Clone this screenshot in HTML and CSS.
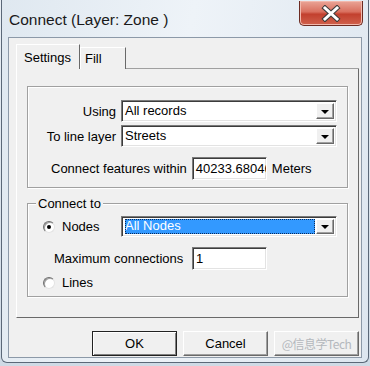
FILE: index.html
```html
<!DOCTYPE html>
<html lang="en">

<head>
    <meta charset="UTF-8">
    <title>Connect (Layer: Zone )</title>
    <link rel="stylesheet" href="styles.css">
</head>

<body>
    <div class="window">
        <div class="titlebar">
            <span class="title">Connect (Layer: Zone )</span>
            <div class="close-btn">
                <svg width="20" height="17" viewBox="0 0 20 17">
                    <path d="M4 3 L16 14 M16 3 L4 14" stroke="#3b3b3b" stroke-width="5" stroke-linecap="square" fill="none" />
                    <path d="M4 3 L16 14 M16 3 L4 14" stroke="#ffffff" stroke-width="3" stroke-linecap="square" fill="none" />
                </svg>
            </div>
        </div>

        <div class="client">
            <div class="tab-strip">
                <div class="tab tab-active">Settings</div>
                <div class="tab">Fill</div>
                <div class="tab-rest"></div>
            </div>

            <div class="tab-panel">
                <!-- options group, no caption -->
                <div class="group group-options">
                    <div class="field-row">
                        <span class="field-label">Using</span>
                        <div class="combo">
                            <span class="combo-text">All records</span>
                            <span class="combo-btn"><span class="arrow"></span></span>
                        </div>
                    </div>
                    <div class="field-row row-gap-small">
                        <span class="field-label">To line layer</span>
                        <div class="combo">
                            <span class="combo-text">Streets</span>
                            <span class="combo-btn"><span class="arrow"></span></span>
                        </div>
                    </div>
                    <div class="field-row row-within">
                        <span class="within-label">Connect features within</span>
                        <div class="textbox">40233.68046</div>
                        <span class="unit">Meters</span>
                    </div>
                </div>

                <fieldset class="group group-connect">
                    <legend>Connect to</legend>
                    <div class="field-row row-nodes">
                        <div class="radio-label"><span class="radio radio-on"></span>Nodes</div>
                        <div class="combo combo-focus">
                            <span class="combo-text"><span class="selection">All Nodes</span></span>
                            <span class="combo-btn"><span class="arrow"></span></span>
                        </div>
                    </div>
                    <div class="field-row row-max">
                        <span class="max-label">Maximum connections</span>
                        <div class="textbox">1</div>
                    </div>
                    <div class="field-row row-lines">
                        <div class="radio-label"><span class="radio"></span>Lines</div>
                    </div>
                </fieldset>
            </div>

            <div class="button-row">
                <button class="btn btn-default">OK</button>
                <button class="btn">Cancel</button>
                <button class="btn btn-help"><span class="watermark">@信息学Tech</span></button>
            </div>
        </div>
    </div>
</body>

</html>
```

FILE: styles.css
```css
*,
*::before,
*::after {
    box-sizing: border-box;
    margin: 0;
    padding: 0;
}

body {
    width: 370px;
    height: 366px;
    overflow: hidden;
    background: linear-gradient(#e9eff5, #cfdae5);
    font-family: "Liberation Sans", Arial, sans-serif;
    font-size: 13px;
    color: #000;
    white-space: nowrap;
}

.window {
    width: 368px;
    height: 363px;
    margin-left: 1px;
    border: 1px solid #5b6878;
    border-top: none;
    border-radius: 0 0 6px 6px;
    background: linear-gradient(100deg, #dfe8f0 0%, #eef3f8 45%, #dde6ef 100%);
}

/* title bar */
.titlebar {
    height: 37px;
    display: flex;
    justify-content: space-between;
    align-items: flex-start;
    padding-left: 7px;
    padding-right: 5px;
}

.title {
    margin-top: 11px;
    font-size: 15.5px;
    line-height: 18px;
    color: #1a1a1a;
}

.close-btn {
    width: 64px;
    height: 25px;
    margin-top: 1px;
    display: flex;
    justify-content: center;
    align-items: center;
    border: 1px solid #6c2b22;
    border-top: none;
    border-radius: 0 0 5px 5px;
    background: linear-gradient(#eaa597 0%, #d9705f 45%, #c2402e 55%, #d0614c 100%);
    box-shadow: inset 0 0 0 1px #f2b9ad;
}

/* client area */
.client {
    width: 354px;
    height: 321px;
    margin-left: 6px;
    border: 1px solid #8c99a8;
    background-color: #f0f0f0;
    padding-top: 6px;
}

.tab-strip {
    display: flex;
    align-items: flex-end;
    width: 343px;
    height: 25px;
    margin-left: 7px;
}

.tab {
    height: 22px;
    padding: 3px 0 0 4px;
    width: 46px;
    border-left: 1px solid #fff;
    border-top: 1px solid #fff;
    border-right: 1px solid #696969;
    line-height: 15px;
}

.tab-active {
    height: 25px;
    width: 64px;
    padding: 5px 0 0 7px;
}

.tab-rest {
    flex: 1;
    height: 1px;
    border-bottom: 1px solid #a0a0a0;
}

.tab-panel {
    width: 343px;
    height: 249px;
    margin-left: 7px;
    border-left: 1px solid #fff;
    border-right: 1px solid #696969;
    border-bottom: 1px solid #696969;
    padding-top: 17px;
}

/* group boxes */
.group {
    width: 321px;
    margin-left: 10px;
    border: 1px solid #a0a0a0;
    box-shadow: 1px 1px 0 #fff, inset 1px 1px 0 #fff;
}

.group-options {
    height: 102px;
    padding-top: 13px;
}

.group-connect {
    height: 101px;
    margin-top: 8px;
    padding-top: 5px;
    min-inline-size: 0;
}

.group-connect legend {
    margin-left: 8px;
    padding: 0 2px;
    line-height: 15px;
    background-color: #f0f0f0;
}

.field-row {
    display: flex;
    align-items: center;
}

.row-gap-small {
    margin-top: 3px;
}

.field-label {
    width: 89px;
    text-align: right;
    padding-right: 1px;
}

/* combo boxes */
.combo {
    width: 216px;
    height: 22px;
    margin-left: 4px;
    display: flex;
    background-color: #fff;
    border: 1px solid;
    border-color: #7a7a7a #fff #fff #7a7a7a;
    box-shadow: inset 1px 1px 0 #3c3c3c, inset -1px -1px 0 #e3e3e3;
    padding: 2px;
}

.combo-text {
    flex: 1;
    line-height: 16px;
    padding-left: 1px;
}

.combo-btn {
    width: 18px;
    display: flex;
    justify-content: center;
    align-items: center;
    background-color: #f0f0f0;
    border: 1px solid;
    border-color: #fff #696969 #696969 #fff;
    box-shadow: inset -1px -1px 0 #a0a0a0;
}

.arrow {
    width: 0;
    height: 0;
    border-left: 4px solid transparent;
    border-right: 4px solid transparent;
    border-top: 4px solid #000;
    margin-top: 1px;
}

.combo-focus {
    height: 21px;
}

.selection {
    display: block;
    margin-right: 1px;
    height: 15px;
    line-height: 13px;
    color: #fff;
    background-color: #3399ff;
    outline: 1px dotted #0a2a5a;
    outline-offset: -1px;
}

/* text boxes */
.textbox {
    width: 75px;
    height: 23px;
    overflow: hidden;
    background-color: #fff;
    border: 1px solid;
    border-color: #7a7a7a #fff #fff #7a7a7a;
    box-shadow: inset 1px 1px 0 #3c3c3c, inset -1px -1px 0 #e3e3e3;
    padding: 3px 0 0 3px;
    line-height: 15px;
}

.row-within {
    margin-top: 10px;
    padding-left: 23px;
}

.within-label {
    margin-right: 5px;
}

.unit {
    margin-left: 5px;
}

.row-max {
    margin-top: 10px;
    padding-left: 26px;
}

.max-label {
    width: 131px;
    margin-right: 7px;
}

.row-lines {
    margin-top: 5px;
}

/* radio buttons */
.radio-label {
    width: 89px;
    padding-left: 15px;
    display: flex;
    align-items: center;
    line-height: 15px;
}

.radio {
    width: 12px;
    height: 12px;
    margin-right: 7px;
    border-radius: 50%;
    border: 1px solid;
    border-color: #6e6e6e #e3e3e3 #e3e3e3 #6e6e6e;
    background-color: #fff;
    box-shadow: inset 1px 1px 0 #a0a0a0;
    display: flex;
    justify-content: center;
    align-items: center;
}

.radio-on::after {
    content: "";
    width: 4px;
    height: 4px;
    border-radius: 50%;
    background-color: #000;
}

/* buttons */
.button-row {
    display: flex;
    gap: 6px;
    margin-top: 13px;
    padding-left: 83px;
}

.btn {
    width: 85px;
    height: 25px;
    font-family: inherit;
    font-size: 13px;
    color: #000;
    background-color: #f0f0f0;
    border: 1px solid;
    border-color: #fff #696969 #696969 #fff;
    box-shadow: inset -1px -1px 0 #a0a0a0;
}

.btn-default {
    border-color: #222;
    box-shadow: inset 1px 1px 0 #fff, inset -1px -1px 0 #808080;
}

.watermark {
    color: #b4b8bd;
    font-family: "Noto Sans CJK SC", "Liberation Sans", sans-serif;
    font-size: 12px;
    letter-spacing: -0.5px;
}
```
